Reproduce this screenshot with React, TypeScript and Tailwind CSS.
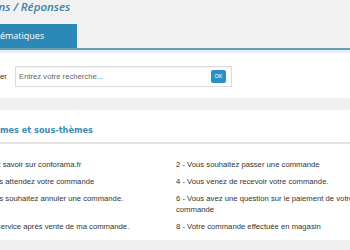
import React from 'react';

const themes = [
  '1 - Tout savoir sur conforama.fr',
  '2 - Vous souhaitez passer une commande',
  '3 - Vous attendez votre commande',
  '4 - Vous venez de recevoir votre commande.',
  '5 - Vous souhaitez annuler une commande.',
  '6 - Vous avez une question sur le paiement de votre commande',
  '7 - Le service après vente de ma commande.',
  '8 - Votre commande effectuée en magasin'
];

export default function App() {
  return (
    <div className="w-[350px] h-[250px] overflow-hidden bg-white font-['Liberation_Sans',Arial,sans-serif]">
      {/* Header */}
      <div className="bg-[#f1f1f1] h-[48px] flex flex-col">
        <div className="h-[24px] ml-[-42px] whitespace-nowrap font-['Open_Sans',sans-serif] italic font-semibold text-[11.5px] leading-[14px] text-[#3a80a8]">
          Questions / Réponses
        </div>
        <div className="h-[24px] w-[93px] ml-[-16px] bg-[#2b88b7] flex items-center pl-[5.5px] font-['Open_Sans',sans-serif] text-[9px] text-white whitespace-nowrap">
          Thématiques
        </div>
      </div>
      <div className="h-[2px] bg-[#6b9db5]" />
      <div className="h-[3px] bg-[#e4f2f7]" />

      {/* Search */}
      <div className="pt-[13px] pb-[11px] flex items-center">
        <span className="ml-[-33px] w-[40px] text-[7.7px] text-[#333] whitespace-nowrap">Rechercher</span>
        <div className="ml-[8px] w-[217px] h-[21px] border border-[#dcdcdc] bg-white shadow-[inset_0_1px_2px_rgba(0,0,0,0.06)] flex items-center pl-[3px] pr-[5px]">
          <span className="flex-1 text-[7.7px] text-[#666] whitespace-nowrap">Entrez votre recherche...</span>
          <button className="w-[15px] h-[13px] rounded-[2px] bg-[#2d8fc4] text-white text-[5.5px] leading-none flex items-center justify-center">
            OK
          </button>
        </div>
      </div>
      <div className="h-[12px] bg-[#f0f0f0]" />

      {/* Themes */}
      <div className="pt-[14px] pb-[8px]">
        <h2 className="ml-[-17px] font-['DejaVu_Sans',Verdana,sans-serif] font-bold text-[8.2px] leading-[12px] text-[#3d8bb3] whitespace-nowrap">
          Thèmes et sous-thèmes
        </h2>
        <div className="mt-[6px] h-[2px] bg-[#e2e2e2]" />
        <div className="mt-[15px] ml-[-25px] grid grid-cols-[201px_201px] gap-y-[6px] text-[7.7px] leading-[11px] text-[#333]">
          {themes.map((t) => (
            <div key={t}>{t}</div>
          ))}
        </div>
      </div>
      <div className="h-[20px] bg-[#f0f0f0]" />
    </div>
  );
}
